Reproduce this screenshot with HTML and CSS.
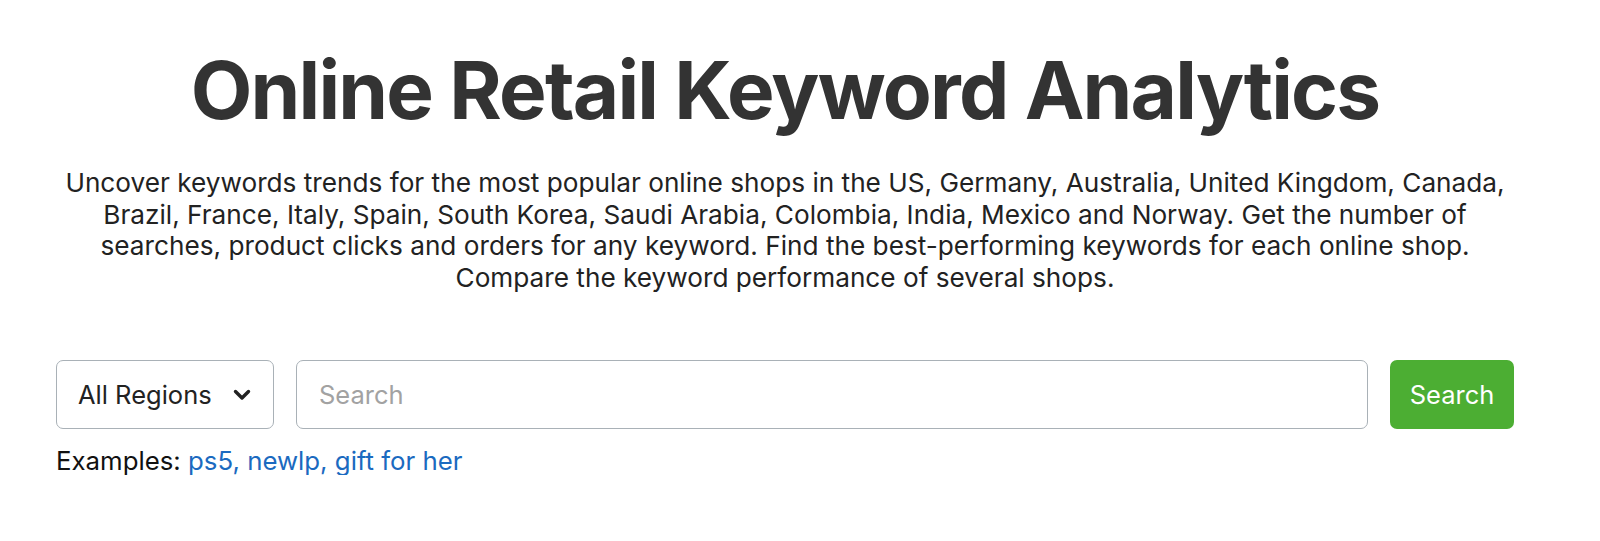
FILE: index.html
```html
<!DOCTYPE html>
<html lang="en">
<head>
<meta charset="utf-8">
<title>Online Retail Keyword Analytics</title>
<link rel="stylesheet" href="styles.css">
</head>
<body>
<main class="wrap">
  <h1 class="title">Online Retail Keyword Analytics</h1>
  <p class="lead">Uncover keywords trends for the most popular online shops in the US, Germany, Australia, United Kingdom, Canada, Brazil, France, Italy, Spain, South Korea, Saudi Arabia, Colombia, India, Mexico and Norway. Get the number of searches, product clicks and orders for any keyword. Find the best-performing keywords for each online shop. Compare the keyword performance of several shops.</p>
  <form class="search-row">
    <div class="select">
      <span>All Regions</span>
      <svg class="chev" width="18" height="12" viewBox="0 0 18 12"><path d="M2.5 2.5 L9 9 L15.5 2.5" fill="none" stroke="#222" stroke-width="3.4" stroke-linecap="round" stroke-linejoin="round"/></svg>
    </div>
    <input class="input" type="text" placeholder="Search">
    <button class="btn" type="button">Search</button>
  </form>
  <div class="examples">Examples: <a href="#">ps5, newlp, gift for her</a></div>
</main>
</body>
</html>
```
FILE: styles.css
```css
html, body {
  margin: 0;
  padding: 0;
  background: #fff;
}
body {
  font-family: Inter, "Noto Sans", sans-serif;
  color: #222;
}
.wrap {
  width: 1458px;
  margin-left: 56px;
  display: flex;
  flex-direction: column;
  align-items: stretch;
}
.title {
  margin: 42px 0 0;
  font-size: 80px;
  line-height: 96px;
  font-weight: 700;
  color: #333;
  text-align: center;
  letter-spacing: -1.8px;
}
.lead {
  margin: 29px -12px 0;
  font-size: 26.2px;
  line-height: 31.5px;
  text-align: center;
  color: #222;
}
.search-row {
  margin-top: 67px;
  display: flex;
  gap: 22px;
  height: 69px;
}
.select {
  width: 218px;
  box-sizing: border-box;
  border: 1.5px solid #a9b1b7;
  border-radius: 7px;
  display: flex;
  align-items: center;
  justify-content: space-between;
  padding: 0 22px 0 21px;
  font-size: 25.5px;
  color: #222;
}
.chev {
  display: block;
}
.input {
  flex: 1;
  box-sizing: border-box;
  border: 1.5px solid #a9b1b7;
  border-radius: 7px;
  padding: 0 22px;
  font-family: inherit;
  font-size: 25.5px;
  color: #222;
  outline: none;
}
.input::placeholder {
  color: #a2a2a2;
}
.btn {
  width: 124px;
  border: none;
  border-radius: 7px;
  background: #4cae33;
  color: #fff;
  font-family: inherit;
  font-size: 25.5px;
  padding: 0;
}
.examples {
  margin-top: 18px;
  font-size: 25.8px;
  line-height: 28px;
  color: #111;
}
.examples a {
  color: #1b6ac0;
  text-decoration: none;
}
```
